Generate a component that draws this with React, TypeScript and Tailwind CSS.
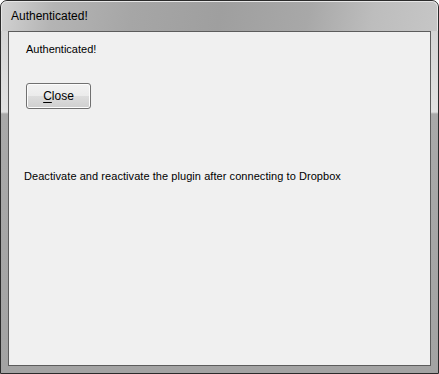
export default function App() {
  return (
    <div
      className="w-[439px] h-[374px] flex flex-col border border-[#2b2b2b] rounded-t-[7px] overflow-hidden bg-[linear-gradient(to_bottom,#cfcfcf_0px,#e2e2e2_111px,#a9a9a9_113px,#a3a3a3_100%)]"
      style={{ fontFamily: '"Liberation Sans", Arial, sans-serif' }}
    >
      {/* Title bar */}
      <div className="h-[30px] shrink-0 flex items-center pl-[9px] rounded-t-[6px] border-t border-l border-r border-[#e6e6e6] bg-[linear-gradient(100deg,#d2d2d2_0%,#b4b4b4_12%,#a6a6a6_30%,#9f9f9f_50%,#a8a8a8_70%,#bdbdbd_85%,#c6c6c6_100%)]">
        <span className="text-[12px] text-black leading-none -mt-[1px]">Authenticated!</span>
      </div>

      {/* Client area */}
      <div className="flex-1 mx-[7px] mb-[7px] border border-[#5c5c5c] bg-[#f0f0f0] flex flex-col pl-[16px] pt-[11px] text-[11px] text-black">
        <div className="leading-[13px] pl-[1px]">Authenticated!</div>
        <button className="mt-[27px] ml-[1px] w-[65px] h-[26px] rounded-[3px] border border-[#707070] bg-[linear-gradient(to_bottom,#f2f2f2_0%,#ebebeb_50%,#dddddd_51%,#cfcfcf_100%)] shadow-[inset_0_0_0_1px_#fcfcfc] text-[12px] leading-none flex items-center justify-center">
          <span>
            <span className="underline underline-offset-[2px]">C</span>lose
          </span>
        </button>
        <div className="mt-[61px] leading-[13px] -ml-[1px] tracking-[0.06px]">
          Deactivate and reactivate the plugin after connecting to Dropbox
        </div>
      </div>
    </div>
  );
}
